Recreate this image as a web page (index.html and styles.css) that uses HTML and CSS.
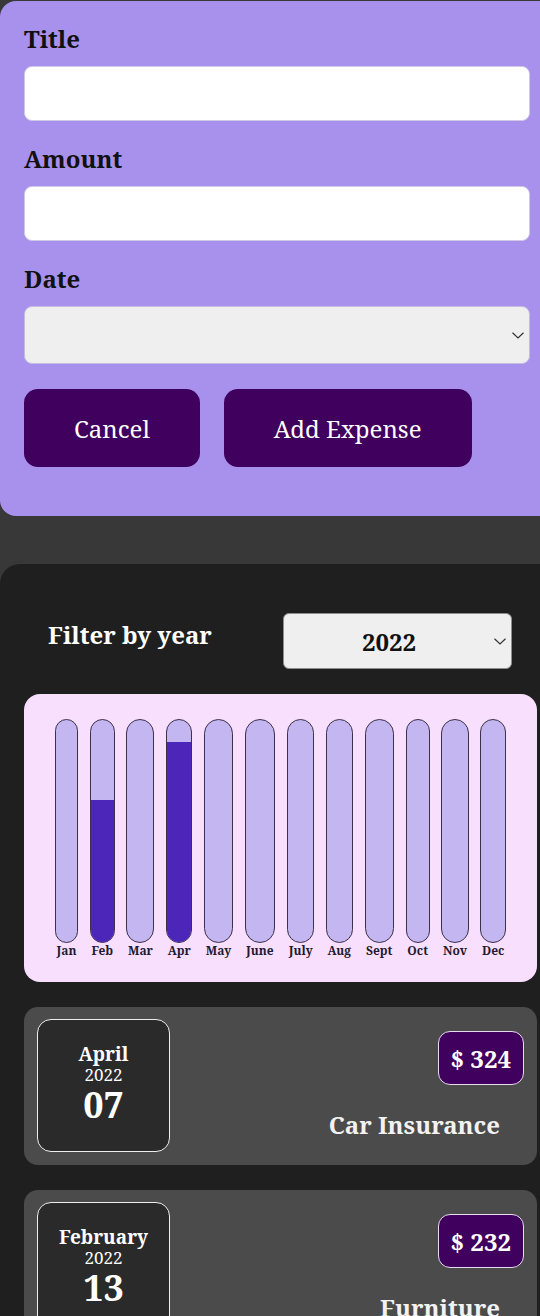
FILE: index.html
```html
<!DOCTYPE html>
<html lang="en">
<head>
<meta charset="utf-8">
<title>Expenses</title>
<link rel="stylesheet" href="styles.css">
</head>
<body>
<div class="page">
  <section class="new-expense">
    <form class="expense-form">
      <div class="control">
        <label class="control-label">Title</label>
        <input class="text-input" type="text">
      </div>
      <div class="control">
        <label class="control-label">Amount</label>
        <input class="text-input" type="text">
      </div>
      <div class="control control-last">
        <label class="control-label">Date</label>
        <div class="picker">
          <svg class="chev" width="12" height="7" viewBox="0 0 12 7"><path d="M0.5 0.8 L6 6 L11.5 0.8" fill="none" stroke="#333" stroke-width="1.2"/></svg>
        </div>
      </div>
      <div class="actions">
        <button class="btn" type="button">Cancel</button>
        <button class="btn" type="button">Add Expense</button>
      </div>
    </form>
  </section>

  <section class="expenses">
    <div class="filter">
      <span class="filter-label">Filter by year</span>
      <div class="year-select">
        <span class="year-value">2022</span>
        <svg class="chev" width="12" height="7" viewBox="0 0 12 7"><path d="M0.5 0.8 L6 6 L11.5 0.8" fill="none" stroke="#333" stroke-width="1.2"/></svg>
      </div>
    </div>

    <div class="chart">
      <div class="bar-col"><div class="bar"><div class="fill" style="height:0%"></div></div><div class="bar-label">Jan</div></div>
      <div class="bar-col"><div class="bar"><div class="fill" style="height:64%"></div></div><div class="bar-label">Feb</div></div>
      <div class="bar-col"><div class="bar"><div class="fill" style="height:0%"></div></div><div class="bar-label">Mar</div></div>
      <div class="bar-col"><div class="bar"><div class="fill" style="height:90%"></div></div><div class="bar-label">Apr</div></div>
      <div class="bar-col"><div class="bar"><div class="fill" style="height:0%"></div></div><div class="bar-label">May</div></div>
      <div class="bar-col"><div class="bar"><div class="fill" style="height:0%"></div></div><div class="bar-label">June</div></div>
      <div class="bar-col"><div class="bar"><div class="fill" style="height:0%"></div></div><div class="bar-label">July</div></div>
      <div class="bar-col"><div class="bar"><div class="fill" style="height:0%"></div></div><div class="bar-label">Aug</div></div>
      <div class="bar-col"><div class="bar"><div class="fill" style="height:0%"></div></div><div class="bar-label">Sept</div></div>
      <div class="bar-col"><div class="bar"><div class="fill" style="height:0%"></div></div><div class="bar-label">Oct</div></div>
      <div class="bar-col"><div class="bar"><div class="fill" style="height:0%"></div></div><div class="bar-label">Nov</div></div>
      <div class="bar-col"><div class="bar"><div class="fill" style="height:0%"></div></div><div class="bar-label">Dec</div></div>
    </div>

    <ul class="expense-list">
      <li class="expense-item">
        <div class="expense-date">
          <div class="date-month">April</div>
          <div class="date-year">2022</div>
          <div class="date-day">07</div>
        </div>
        <div class="expense-desc">
          <div class="expense-price">$ 324</div>
          <h2 class="expense-title">Car Insurance</h2>
        </div>
      </li>
      <li class="expense-item">
        <div class="expense-date">
          <div class="date-month">February</div>
          <div class="date-year">2022</div>
          <div class="date-day">13</div>
        </div>
        <div class="expense-desc">
          <div class="expense-price">$ 232</div>
          <h2 class="expense-title">Furniture</h2>
        </div>
      </li>
    </ul>
  </section>
</div>
</body>
</html>
```

FILE: styles.css
```css
* {
  box-sizing: border-box;
}

body {
  margin: 0;
  background: #383838;
  overflow: hidden;
  font-family: "Noto Serif", "DejaVu Serif", serif;
}

.page {
  width: 561px;
  padding-top: 1px;
}

/* ---------- New expense form ---------- */
.new-expense {
  width: 554px;
  background: #a891ec;
  border-radius: 16px 0 0 16px;
  padding: 23px 24px 49px;
}

.control {
  margin-bottom: 23px;
}

.control-last {
  margin-bottom: 25px;
}

.control-label {
  display: block;
  font-size: 24px;
  line-height: 30px;
  font-weight: bold;
  color: #111;
  margin-bottom: 12px;
}

.text-input {
  display: block;
  width: 100%;
  height: 55px;
  margin: 0;
  border: 1px solid #cfc8e6;
  border-radius: 8px;
  background: #fff;
  font: inherit;
}

.picker {
  display: flex;
  align-items: center;
  justify-content: flex-end;
  height: 58px;
  padding-right: 5px;
  background: #efefef;
  border: 1px solid #c4bcdf;
  border-radius: 8px;
}

.actions {
  display: flex;
  gap: 24px;
}

.btn {
  height: 78px;
  padding: 0 50px;
  border: none;
  border-radius: 14px;
  background: #40005d;
  color: #fff;
  font-family: inherit;
  font-size: 24px;
  cursor: pointer;
}

/* ---------- Expenses ---------- */
.expenses {
  margin-top: 48px;
  background: #1f1f1f;
  border-radius: 20px 20px 0 0;
  padding: 49px 24px 24px;
  min-height: 760px;
}

.filter {
  display: flex;
  align-items: flex-start;
  justify-content: space-between;
  padding: 0 25px 0 24px;
}

.filter-label {
  margin-top: 7px;
  color: #fff;
  font-size: 24px;
  line-height: 30px;
  font-weight: bold;
}

.year-select {
  display: flex;
  align-items: center;
  width: 229px;
  height: 56px;
  padding-right: 5px;
  background: #efefef;
  border: 1px solid #8d8d8d;
  border-radius: 6px;
}

.year-value {
  flex: 1;
  text-align: center;
  font-size: 24px;
  font-weight: bold;
  color: #111;
}

/* ---------- Chart ---------- */
.chart {
  display: flex;
  justify-content: space-between;
  height: 288px;
  margin-top: 25px;
  padding: 25px 31px 0;
  background: #f8dffe;
  border-radius: 16px;
}

.bar-col {
  display: flex;
  flex-direction: column;
  align-items: stretch;
}

.bar {
  display: flex;
  flex-direction: column;
  justify-content: flex-end;
  height: 224px;
  border: 1px solid #3c3148;
  border-radius: 15px;
  background: #c3b6f1;
  overflow: hidden;
}

.fill {
  background: #4b26b9;
}

.bar-label {
  padding: 0 1.5px;
  font-size: 12px;
  line-height: 16px;
  font-weight: bold;
  text-align: center;
  color: #221a30;
}

/* ---------- Expense list ---------- */
.expense-list {
  list-style: none;
  margin: 25px 0 0;
  padding: 0;
  display: flex;
  flex-direction: column;
  gap: 25px;
}

.expense-item {
  display: flex;
  height: 158px;
  padding: 12px 13px;
  background: #4b4b4b;
  border-radius: 14px;
}

.expense-date {
  display: flex;
  flex-direction: column;
  align-items: center;
  justify-content: center;
  width: 133px;
  height: 133px;
  padding-bottom: 4px;
  border: 1px solid #eee;
  border-radius: 14px;
  background: #2a2a2a;
  color: #fff;
}

.date-month {
  font-size: 19px;
  line-height: 22px;
  font-weight: bold;
}

.date-year {
  font-size: 17px;
  line-height: 20px;
}

.date-day {
  font-size: 36px;
  line-height: 40px;
  font-weight: bold;
}

.expense-desc {
  flex: 1;
  display: flex;
  flex-direction: column;
  align-items: flex-end;
  padding-top: 12px;
}

.expense-price {
  display: flex;
  align-items: center;
  height: 54px;
  padding: 0 12px;
  background: #40005d;
  border: 1px solid #e8dcef;
  border-radius: 12px;
  color: #fff;
  font-size: 24px;
  font-weight: bold;
}

.expense-title {
  margin: 25px 24px 0 0;
  font-size: 24px;
  line-height: 30px;
  font-weight: bold;
  color: #f2f2f2;
}
```
